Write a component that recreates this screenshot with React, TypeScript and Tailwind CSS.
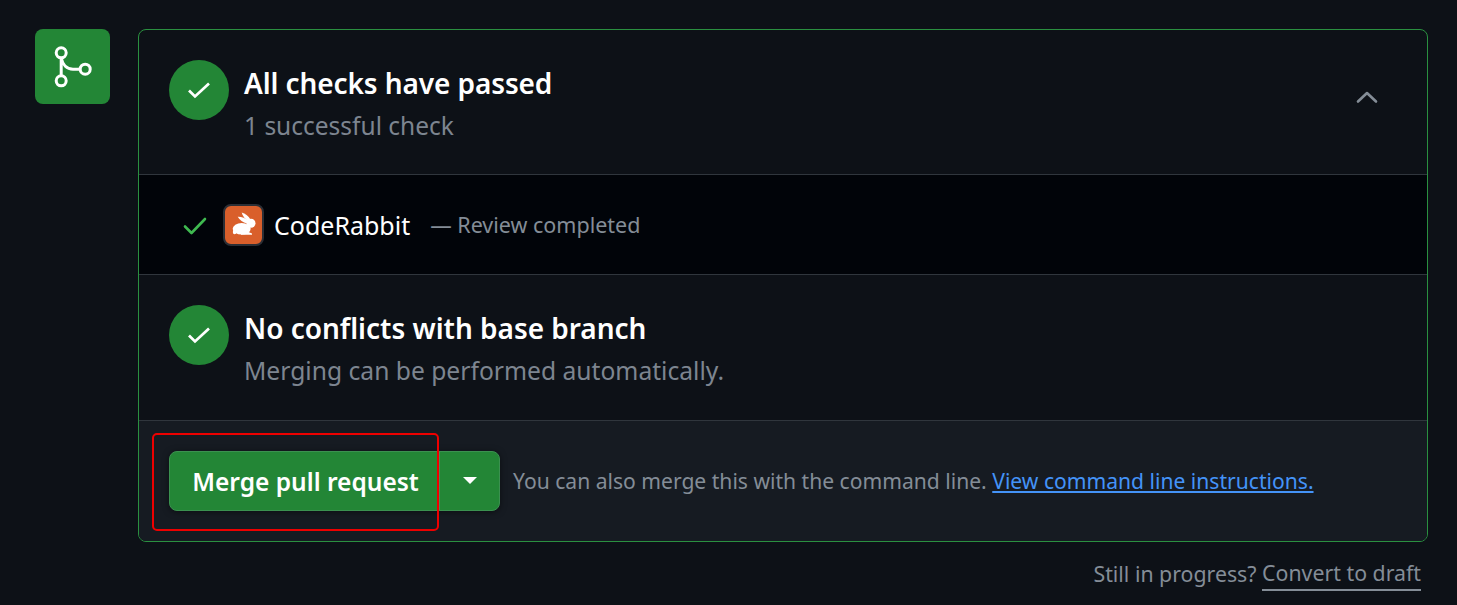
import React from "react";

function CheckCircle() {
  return (
    <div className="flex h-[60px] w-[60px] shrink-0 items-center justify-center rounded-full bg-[#238636]">
      <svg width="24" height="24" viewBox="0 0 24 24" fill="none" stroke="#ffffff" strokeWidth="2.7">
        <path d="M2 12.5 L8 18.5 L22 5.5" />
      </svg>
    </div>
  );
}

function Rabbit() {
  return (
    <svg width="26" height="26" viewBox="0 0 26 26" fill="#ffffff">
      <ellipse cx="10.7" cy="16.8" rx="9" ry="5.8" />
      <ellipse cx="3.6" cy="20" rx="1.8" ry="2.2" />
      <circle cx="20" cy="11.3" r="4.5" />
      <path d="M10.7 0.5 C14 1.5 17.5 4 19.5 7.5 L17 9 C14 7 11.5 4 10.7 0.5 Z" />
      <path d="M6.7 4.7 C10 4.5 14.5 6 17.5 8.5 L16 11.5 C12 10.5 8.5 8 6.7 4.7 Z" />
      <path d="M12.5 12 L19 14 L17.5 20 L21 21.4 V22.8 H10 V20 Z" />
    </svg>
  );
}

export default function App() {
  return (
    <div className="relative h-[605px] w-[1457px] overflow-hidden bg-[#0d1117] font-['Noto_Sans','Open_Sans',sans-serif]">
      <div className="flex items-start gap-[28px] pl-[35px] pr-[29px] pt-[29px]">
        <div className="flex h-[75px] w-[75px] shrink-0 items-center justify-center rounded-[8px] bg-[#238636]">
          <svg width="40" height="42" viewBox="0 0 40 42" fill="none" stroke="#ffffff" strokeWidth="3">
            <circle cx="8.2" cy="6.8" r="5" />
            <circle cx="8.2" cy="34.8" r="5" />
            <circle cx="32.2" cy="23.2" r="5" />
            <path d="M8.2 11.8 V29.8 M8.2 11.8 C9.5 19 14 23.2 20 23.2 H27.2" />
          </svg>
        </div>

        <div className="flex-1">
          <div className="overflow-hidden rounded-[8px] border border-[#2a9040]">
            <div className="flex h-[144px] items-start pl-[30px] pr-[48px] pt-[30px]">
              <CheckCircle />
              <div className="ml-[15px] flex-1 pt-[4px]">
                <div className="text-[28px] font-semibold leading-[38px] tracking-[-0.1px] text-white">All checks have passed</div>
                <div className="mt-[7px] text-[24.5px] leading-[34px] text-[#7d8590]">1 successful check</div>
              </div>
              <svg className="mt-[30px]" width="24" height="24" viewBox="0 0 24 24" fill="none" stroke="#848d97" strokeWidth="2.6" strokeLinecap="round" strokeLinejoin="round">
                <path d="M3 11.5 L12 3 L21 11.5" />
              </svg>
            </div>

            <div className="flex h-[101px] items-center border-y border-[#30363d] bg-[#010409] pl-[43px]">
              <svg width="26" height="26" viewBox="0 0 26 26" fill="none" stroke="#3fb950" strokeWidth="2.6" strokeLinecap="round" strokeLinejoin="round">
                <path d="M3 14 L9.5 20.5 L23 6.5" transform="translate(0 0.5)" />
              </svg>
              <div className="ml-[15px] flex h-[42px] w-[41px] items-center justify-center rounded-[8px] border-2 border-[#2b2f36] bg-[#d95f2b]">
                <Rabbit />
              </div>
              <span className="ml-[10px] text-[25px] leading-[32px] text-white">CodeRabbit</span>
              <span className="ml-[20px] text-[21.5px] leading-[30px] text-[#848d97]">— Review completed</span>
            </div>

            <div className="flex h-[145px] items-start pl-[30px] pt-[30px]">
              <CheckCircle />
              <div className="ml-[15px] pt-[4px]">
                <div className="text-[28px] font-semibold leading-[38px] tracking-[-0.02px] text-white">No conflicts with base branch</div>
                <div className="mt-[7px] text-[24.65px] leading-[34px] text-[#7d8590]">Merging can be performed automatically.</div>
              </div>
            </div>

            <div className="flex h-[121px] items-center border-t border-[#30363d] bg-[#161b22] pb-[1px] pl-[30px]">
              <div className="flex h-[60px] overflow-hidden rounded-[8px] border border-[#3b9150] bg-[#238636] shadow-[0_1px_6px_rgba(0,0,0,0.5)]">
                <div className="flex w-[270px] items-center justify-center border-r border-[#3f9150] pl-[2px] pt-[3px] text-[24.5px] font-semibold text-white">Merge pull request</div>
                <div className="flex w-[59px] items-center justify-center">
                  <svg width="16" height="9" viewBox="0 0 16 9" fill="#ffffff"><path d="M1 1 H15 L8 8 Z" /></svg>
                </div>
              </div>
              <span className="ml-[13px] whitespace-nowrap text-[21.1px] leading-[30px] text-[#848d97]">
                You can also merge this with the command line.{" "}
                <span className="text-[#4493f8] underline">View command line instructions.</span>
              </span>
            </div>
          </div>

          <div className="mt-[15px] flex justify-end pr-[7px] text-[21.3px] leading-[34px] text-[#848d97]">
            <span>Still in progress?&nbsp;</span>
            <span className="border-b-2 border-[#848d97] leading-[32px]">Convert to draft</span>
          </div>
        </div>
      </div>

      <div className="absolute left-[152px] top-[433px] h-[98px] w-[287px] rounded-[5px] border-2 border-[#ee0000]" />
    </div>
  );
}
